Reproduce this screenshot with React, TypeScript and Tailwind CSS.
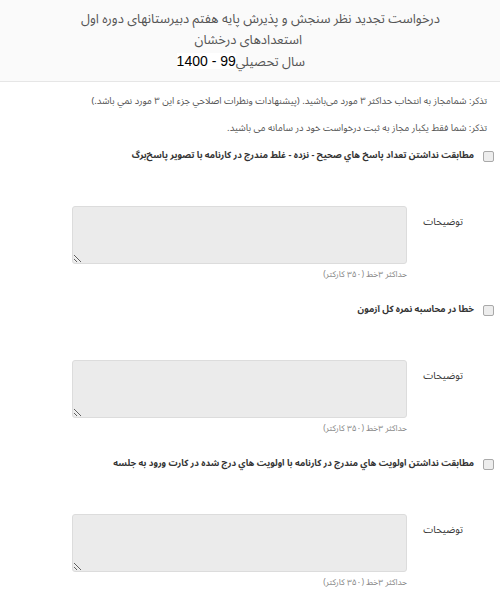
import React from 'react';

const options = [
  'مطابقت نداشتن تعداد پاسخ هاي صحيح - نزده - غلط مندرج در کارنامه با تصوير پاسخ‌برگ',
  'خطا در محاسبه نمره کل آزمون',
  'مطابقت نداشتن اولويت هاي مندرج در کارنامه با اولويت هاي درج شده در کارت ورود به جلسه',
];

const OptionBlock: React.FC<{ title: string }> = ({ title }) => {
  return (
    <div className="h-[154px]">
      <label className="flex items-center gap-[9px] pr-[6px] h-[20px]">
        <span className="w-[11px] h-[11px] rounded-[2px] border border-[#a9a9a9] bg-[#ededed] shrink-0" />
        <span className="text-[9px] font-bold text-[#333] whitespace-nowrap">{title}</span>
      </label>
      <div className="flex items-start mt-[40px]">
        <div className="w-[93px] pr-[37px] pt-[8px] text-[10px] text-[#333] shrink-0">توضیحات</div>
        <div className="w-[335px]">
          <textarea
            className="block w-full h-[58px] bg-[#ebebeb] border border-[#dcdcdc] rounded-[3px] resize-y"
            disabled
          />
          <div className="mt-[3px] text-[8.5px] leading-[14px] text-[#888]">حداکثر ۳خط (۳۵۰ کارکتر)</div>
        </div>
      </div>
    </div>
  );
};

export default function App() {
  return (
    <div dir="rtl" className="min-h-screen bg-white font-['Noto_Sans_Arabic',_sans-serif]">
      <div className="h-[82px] bg-[#fafafa] border-b border-[#e6e6e6] pt-[9px] text-right text-[13px] leading-[21px] text-[#555] whitespace-nowrap">
        <div className="pr-[60px]">درخواست تجدید نظر سنجش و پذیرش پایه هفتم دبیرستانهای دوره اول</div>
        <div className="pr-[198px]">استعدادهای درخشان</div>
        <div className="pr-[195px]">
          سال تحصيلي
          <span className="bg-white text-black text-[14px] font-['Liberation_Sans',_sans-serif]">99 - 1400</span>
        </div>
      </div>
      <div className="pr-[13px] pt-[11px] text-[9.5px] text-[#555] leading-[16px] whitespace-nowrap">
        <p>تذکر: شمامجاز به انتخاب حداکثر ۳ مورد می‌باشید. (پیشنهادات ونظرات اصلاحي جزء اين ۳ مورد نمي باشد.)</p>
        <p className="mt-[11px]">تذکر: شما فقط یکبار مجاز به ثبت درخواست خود در سامانه می باشید.</p>
      </div>
      <div className="mt-[10px]">
        {options.map((o) => (
          <OptionBlock key={o} title={o} />
        ))}
      </div>
    </div>
  );
}
